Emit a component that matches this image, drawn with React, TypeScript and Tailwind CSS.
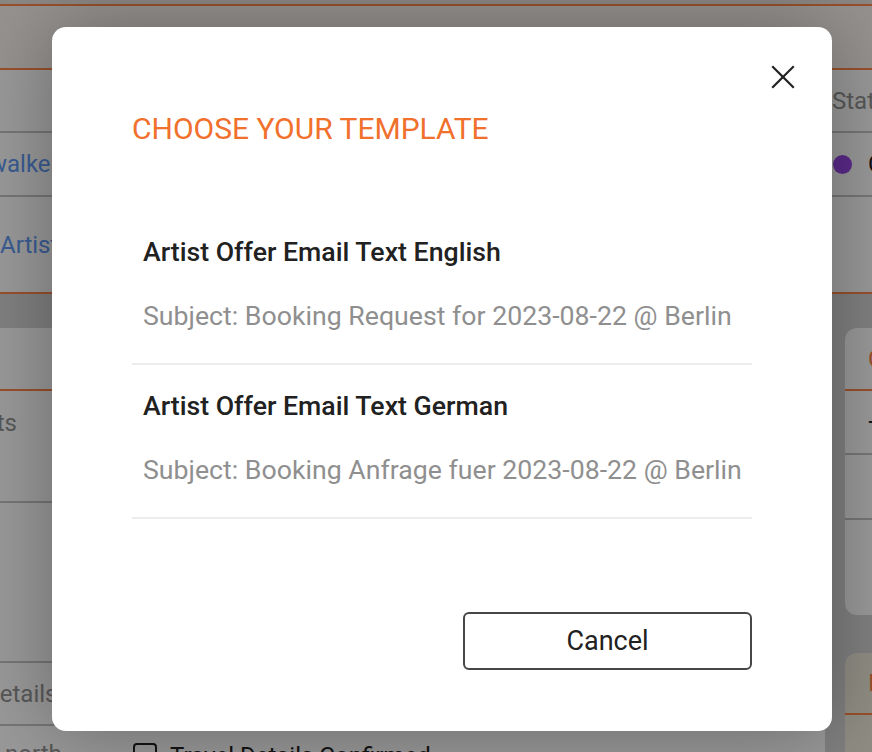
const templates = [
  {
    id: 'en',
    name: 'Artist Offer Email Text English',
    subject: 'Subject: Booking Request for 2023-08-22 @ Berlin',
  },
  {
    id: 'de',
    name: 'Artist Offer Email Text German',
    subject: 'Subject: Booking Anfrage fuer 2023-08-22 @ Berlin',
  },
]

function CloseIcon() {
  return (
    <svg width="24" height="24" viewBox="0 0 24 24" fill="none" stroke="currentColor" strokeWidth="2.2" strokeLinecap="square">
      <path d="M2 2 L22 22" />
      <path d="M22 2 L2 22" />
    </svg>
  )
}

function BackgroundPage() {
  return (
    <div className="h-[752px] w-[872px] overflow-hidden bg-[#d6d6d6] text-[24px] leading-[30px]">
      <div className="h-[4px] bg-[#e8e1dc]" />
      <div className="h-[2px] bg-[#ff8548]" />
      <div className="h-[62px] bg-[#fbf3ee]" />
      <div className="h-[2px] bg-[#ff8548]" />

      <div className="bg-white">
        <div className="flex h-[63px] items-center border-b-2 border-[#c5c5c5] pl-[832px] text-[#939393]">
          Status
        </div>
        <div className="flex h-[64px] items-center border-b-2 border-[#c5c5c5]">
          <span className="-ml-[11px] text-[#6199f5]">walker</span>
          <span className="ml-auto mr-[16px] h-[19px] w-[19px] shrink-0 rounded-full bg-[#9846e6]" />
          <span className="-mr-[60px] w-[64px] shrink-0 text-[#222]">Confirmed</span>
        </div>
        <div className="flex h-[95px] items-center">
          <span className="text-[#6199f5]">Artist</span>
        </div>
      </div>
      <div className="h-[2px] bg-[#ff8548]" />

      <div className="flex gap-[20px] pt-[34px]">
        <div className="-ml-[20px] flex-1 rounded-[12px] bg-white">
          <div className="h-[63px] border-b-2 border-[#ff8548]" />
          <div className="h-[112px] border-b-2 border-[#c5c5c5] pt-[17px]">
            <span className="pl-[20px] text-[#939393]">
              <span className="-ml-[55px]">Flights</span>
            </span>
          </div>
          <div className="h-[160px] border-b-2 border-[#c5c5c5]" />
          <div className="flex h-[63px] items-center border-b-2 border-[#c5c5c5]">
            <span className="ml-[4px] text-[#939393]">Details</span>
          </div>
          <div className="flex items-start pt-[9px]">
            <span className="ml-[25px] mt-[4px] w-[128px] text-[#939393]">north</span>
            <span className="mt-[8px] h-[24px] w-[24px] shrink-0 rounded-[4px] border-2 border-[#222]" />
            <span className="ml-[13px] mt-[6px] text-[#222]">Travel Details Confirmed</span>
          </div>
        </div>

        <div className="-mr-[133px] flex w-[160px] shrink-0 flex-col gap-[38px]">
          <div className="rounded-[12px] bg-white">
            <div className="flex h-[63px] items-center border-b-2 border-[#ff8548] pl-[23px] text-[#ff8548]">
              Contacts
            </div>
            <div className="flex h-[64px] items-center border-b-2 border-[#c5c5c5] pl-[23px] text-[#222]">
              +
            </div>
            <div className="h-[65px] border-b-2 border-[#c5c5c5]" />
            <div className="h-[95px]" />
          </div>
          <div className="rounded-[12px] bg-[#f1ecdd]">
            <div className="flex h-[62px] items-center border-b-2 border-[#ff8548] pl-[23px] text-[#ff8548]">
              Invoice
            </div>
            <div className="h-[80px]" />
          </div>
        </div>
      </div>
    </div>
  )
}

function TemplateModal() {
  return (
    <div className="relative flex h-[704px] w-[780px] flex-col rounded-[14px] bg-white px-[80px] pt-[86px] shadow-[0_0_80px_rgba(0,0,0,0.32)]">
      <button className="absolute right-[37px] top-[38px] text-[#222]" aria-label="Close">
        <CloseIcon />
      </button>

      <h2 className="text-[30px] leading-[32px] font-normal text-[#f0702c]">CHOOSE YOUR TEMPLATE</h2>

      <ul className="mt-[66px] flex flex-col">
        {templates.map((t) => (
          <li key={t.id} className="border-b-2 border-[#ececec] px-[11px] pt-[25px] pb-[31px]">
            <div className="whitespace-nowrap text-[26.7px] leading-[32px] font-medium text-[#212121]">{t.name}</div>
            <div className="mt-[32px] whitespace-nowrap text-[26.7px] leading-[32px] text-[#8f8f8f]">{t.subject}</div>
          </li>
        ))}
      </ul>

      <div className="mt-[93px] flex justify-end">
        <button className="h-[58px] w-[289px] rounded-[6px] border-2 border-[#474747] text-[27px] text-[#212121]">
          Cancel
        </button>
      </div>
    </div>
  )
}

export default function App() {
  return (
    <div className="relative h-[752px] w-[872px] overflow-hidden font-['Roboto',sans-serif]">
      <BackgroundPage />
      <div className="absolute inset-0 bg-black/40 pl-[52px] pt-[27px]">
        <TemplateModal />
      </div>
    </div>
  )
}
